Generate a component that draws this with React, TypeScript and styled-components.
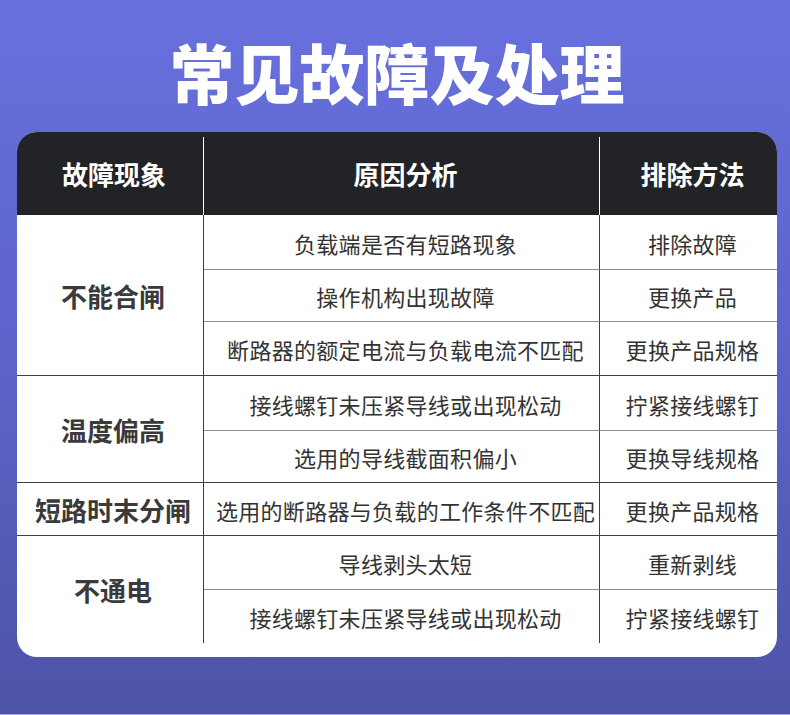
import styled, { createGlobalStyle } from 'styled-components';

const GlobalStyle = createGlobalStyle`
  html, body {
    margin: 0;
    padding: 0;
  }
  body {
    font-family: 'Noto Sans CJK SC', 'Noto Sans', sans-serif;
  }
`;

const Page = styled.div`
  width: 790px;
  height: 715px;
  box-sizing: border-box;
  background: linear-gradient(180deg, #6770dd 0%, #5d65cc 45%, #4d54a6 100%);
  border-bottom: 1px solid #a4a8da;
  padding-top: 38px;
  overflow: hidden;
`;

const Title = styled.h1`
  margin: 0 0 28px;
  height: 66px;
  line-height: 66px;
  text-align: center;
  font-size: 65px;
  font-weight: 900;
  color: #ffffff;
  padding-left: 4px;
`;

const Card = styled.div`
  margin: 0 13px 0 17px;
  background: #ffffff;
  border-radius: 20px;
  overflow: hidden;
  padding-bottom: 14px;
`;

const cols = '187px 396px 177px';

const HeadRow = styled.div`
  display: grid;
  grid-template-columns: ${cols};
  height: 83px;
  box-sizing: border-box;
  padding-top: 5px;
  background: #222326;
`;

const HeadCell = styled.div<{ $last?: boolean }>`
  display: flex;
  align-items: center;
  justify-content: center;
  padding: 0 0 5px 8px;
  color: #ffffff;
  font-size: 26px;
  font-weight: 700;
  border-right: ${(p) => (p.$last ? 'none' : '1px solid #ffffff')};
`;

const Body = styled.div`
  display: grid;
  grid-template-columns: ${cols};
  grid-template-rows: 55px 52px 54px 55px 52px 53px 54px 53px;
`;

const GroupCell = styled.div<{ $span: number; $last?: boolean }>`
  grid-column: 1;
  grid-row: span ${(p) => p.$span};
  display: flex;
  align-items: center;
  justify-content: center;
  box-sizing: border-box;
  padding-left: 6px;
  border-right: 1px solid #404040;
  border-bottom: ${(p) => (p.$last ? 'none' : '1px solid #404040')};
  color: #3a3a3a;
  font-size: 26px;
  font-weight: 700;
  white-space: nowrap;
`;

const Cell = styled.div<{ $col: number; $line: 'end' | 'sub' | 'none' }>`
  grid-column: ${(p) => p.$col};
  display: flex;
  align-items: center;
  justify-content: center;
  box-sizing: border-box;
  padding: 1px 0 0 8px;
  border-right: ${(p) => (p.$col === 2 ? '1px solid #404040' : 'none')};
  border-bottom: ${(p) =>
    p.$line === 'end' ? '1px solid #404040' : p.$line === 'sub' ? '1px solid #8c8c8c' : 'none'};
  color: #333333;
  font-size: 22px;
  font-weight: 400;
  letter-spacing: 0.3px;
  white-space: nowrap;
`;

const groups = [
  {
    name: '不能合闸',
    rows: [
      ['负载端是否有短路现象', '排除故障'],
      ['操作机构出现故障', '更换产品'],
      ['断路器的额定电流与负载电流不匹配', '更换产品规格'],
    ],
  },
  {
    name: '温度偏高',
    rows: [
      ['接线螺钉未压紧导线或出现松动', '拧紧接线螺钉'],
      ['选用的导线截面积偏小', '更换导线规格'],
    ],
  },
  {
    name: '短路时末分闸',
    rows: [['选用的断路器与负载的工作条件不匹配', '更换产品规格']],
  },
  {
    name: '不通电',
    rows: [
      ['导线剥头太短', '重新剥线'],
      ['接线螺钉未压紧导线或出现松动', '拧紧接线螺钉'],
    ],
  },
];

export default function App() {
  return (
    <Page>
      <GlobalStyle />
      <Title>常见故障及处理</Title>
      <Card>
        <HeadRow>
          <HeadCell>故障现象</HeadCell>
          <HeadCell>原因分析</HeadCell>
          <HeadCell $last>排除方法</HeadCell>
        </HeadRow>
        <Body>
          {groups.map((g, gi) => {
            const lastGroup = gi === groups.length - 1;
            return [
              <GroupCell key={g.name} $span={g.rows.length} $last={lastGroup}>
                {g.name}
              </GroupCell>,
              ...g.rows.flatMap((r, ri) => {
                const lastRow = ri === g.rows.length - 1;
                const line = lastRow ? (lastGroup ? 'none' : 'end') : 'sub';
                return [
                  <Cell key={`${gi}-${ri}-a`} $col={2} $line={line}>
                    {r[0]}
                  </Cell>,
                  <Cell key={`${gi}-${ri}-b`} $col={3} $line={line}>
                    {r[1]}
                  </Cell>,
                ];
              }),
            ];
          })}
        </Body>
      </Card>
    </Page>
  );
}
